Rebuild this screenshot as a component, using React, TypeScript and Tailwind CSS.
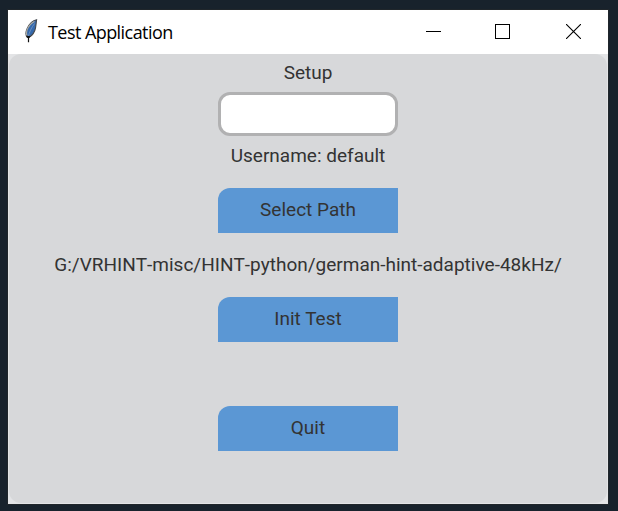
import React from "react";

function Feather() {
  return (
    <svg className="ml-4 h-6 w-[14px] shrink-0 -translate-y-px" viewBox="0 0 14 24" fill="none">
      <path d="M12.6 .7C9 1.2 5.5 4.5 3.2 9.5C1.6 13 1.3 16.3 3.4 18.5C6.5 18 9.2 15.5 10.8 11.5C12 8.5 12 5 12.6 .7Z" fill="#3569ac" stroke="#45474a" strokeWidth="1.1" />
      <path d="M10.5 2.5C7 4.2 4.3 7.4 2.9 11.4C2.1 14 2.2 15.5 3 17.2" stroke="#a9aaa5" strokeWidth="1.2" />
      <path d="M10.6 4.5C7.5 8.5 5.2 13 4.2 18.5" stroke="#7798c4" strokeWidth=".8" />
      <path d="M2.5 16.7L4.5 19L6.2 17.2M4.5 17V23.2" stroke="#111" strokeWidth="1.2" />
    </svg>
  );
}

function TitleBar() {
  return (
    <header className="flex h-11 items-center bg-white text-black">
      <Feather />
      <h1 className="ml-[10px] flex-1 whitespace-nowrap font-['Open_Sans','Noto_Sans',sans-serif] text-[18px] leading-[44px] tracking-[-0.56px]">Test Application</h1>
      <div className="flex items-center pr-[27px] pb-px">
        <svg className="mr-[54px] h-[15px] w-[15px]" viewBox="0 0 15 15" shapeRendering="crispEdges"><path d="M0 7.5H15" stroke="#000" /></svg>
        <svg className="mr-14 h-[15px] w-[15px]" viewBox="0 0 15 15" shapeRendering="crispEdges"><path d="M.5 .5H14.5V14.5H.5Z" fill="none" stroke="#000" /></svg>
        <svg className="h-[15px] w-[15px]" viewBox="0 0 15 15"><path d="M0 0L15 15M15 0L0 15" stroke="#000" strokeWidth="1.1" /></svg>
      </div>
    </header>
  );
}

function ActionButton({ children }: { children: React.ReactNode }) {
  return (
    <button className="h-[45px] w-[180px] shrink-0 rounded-tl-[12px] bg-[#5b97d4]">
      {children}
    </button>
  );
}

export default function App() {
  return (
    <div className="h-[511px] w-[618px] bg-[#18222c] px-2 pt-[10px]">
      <div className="h-[494px] w-[600px] bg-[#e3e4e6] shadow-[0_0_0_1px_#20262b]">
        <TitleBar />
        <main className="mx-px flex h-[449px] flex-col items-center rounded-[12px] bg-[#d7d8da] font-[Roboto,sans-serif] text-[19px] text-[#333]">
          <p className="h-[38px] leading-[38px]">Setup</p>
          <input aria-label="Username" className="h-11 w-[180px] shrink-0 rounded-[12px] border-[3px] border-[#b1b1b2] bg-white px-2 outline-none" />
          <p className="h-[52px] leading-[39px]">Username: default</p>
          <ActionButton>Select Path</ActionButton>
          <p className="h-16 whitespace-nowrap leading-[64px] [font-kerning:none]">G:/VRHINT-misc/HINT-python/german-hint-adaptive-48kHz/</p>
          <ActionButton>Init Test</ActionButton>
          <div className="h-16 shrink-0" />
          <ActionButton>Quit</ActionButton>
        </main>
      </div>
    </div>
  );
}
